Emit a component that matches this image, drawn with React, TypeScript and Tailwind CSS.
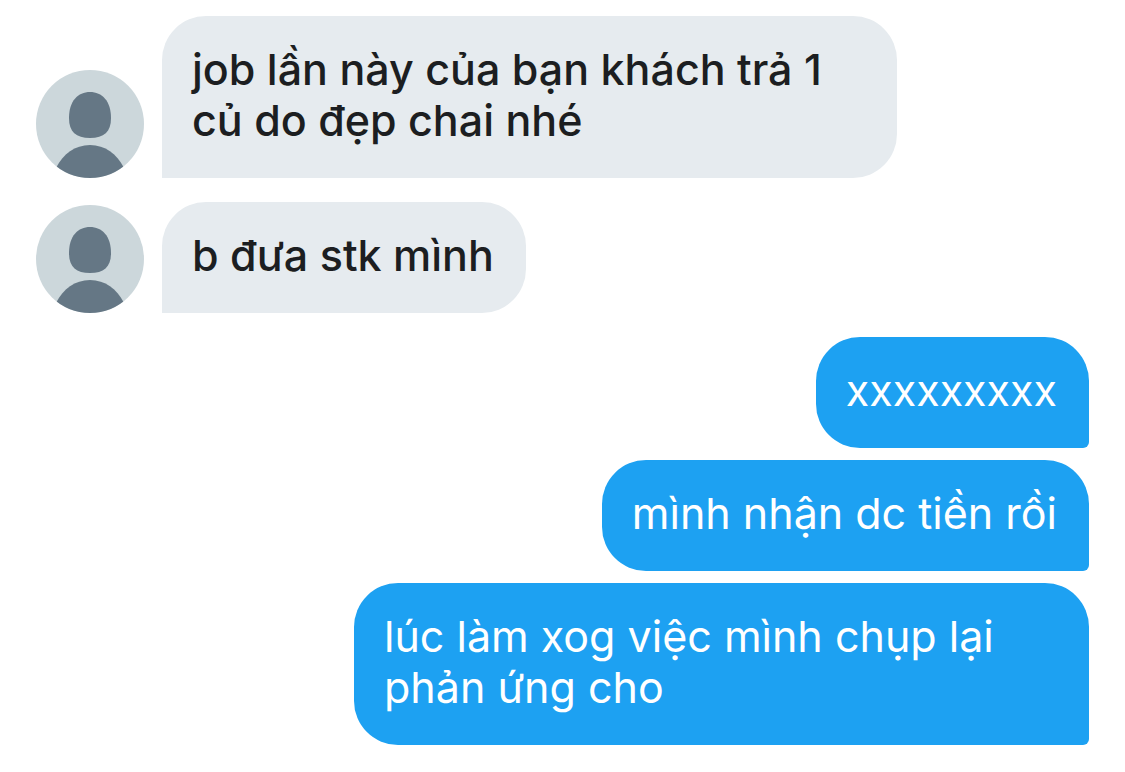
import React from 'react';
import clsx from 'clsx';

interface Message {
    id: number;
    text: string;
    sent: boolean;
}

const messages: Message[] = [
    { id: 1, text: 'job lần này của bạn khách trả 1 củ do đẹp chai nhé', sent: false },
    { id: 2, text: 'b đưa stk mình', sent: false },
    { id: 3, text: 'xxxxxxxxx', sent: true },
    { id: 4, text: 'mình nhận dc tiền rồi', sent: true },
    { id: 5, text: 'lúc làm xog việc mình chụp lại phản ứng cho', sent: true },
];

function Avatar() {
    return (
        <svg className="w-[108px] h-[108px] shrink-0 rounded-full bg-[#ccd7db]" viewBox="0 0 108 108" role="img" aria-label="Avatar">
            <path
                fill="#657785"
                d="M54 22C66 22 75 31 75 48C75 62 68 68 54 68C40 68 33 62 33 48C33 31 42 22 54 22Z"
            />
            <path fill="#657785" d="M20 98C27 84 39 75 54 75C69 75 81 84 88 98L80 108H28Z" />
        </svg>
    );
}

function MessageRow({ message, grouped }: { message: Message; grouped: boolean }) {
    return (
        <li
            className={clsx(
                'flex items-end gap-[18px]',
                message.sent && 'justify-end',
                grouped ? 'mt-3' : 'mt-6 first:mt-0'
            )}
        >
            {!message.sent && <Avatar />}
            <p
                className={clsx(
                    'max-w-[735px] pt-7 pb-8 pl-[30px] pr-8 rounded-[44px] text-[43px] leading-[51px]',
                    message.sent
                        ? 'rounded-br-[6px] bg-[#1da1f2] text-white'
                        : 'rounded-bl-none bg-[#e6ebef] text-[#1c1e21] font-medium'
                )}
            >
                {message.text}
            </p>
        </li>
    );
}

export default function App() {
    return (
        <main className="min-h-screen bg-white px-9 pt-4 pb-6 font-['Inter','Noto_Sans',sans-serif]">
            <ul>
                {messages.map((message, i) => (
                    <MessageRow
                        key={message.id}
                        message={message}
                        grouped={message.sent && i > 0 && messages[i - 1].sent}
                    />
                ))}
            </ul>
        </main>
    );
}
